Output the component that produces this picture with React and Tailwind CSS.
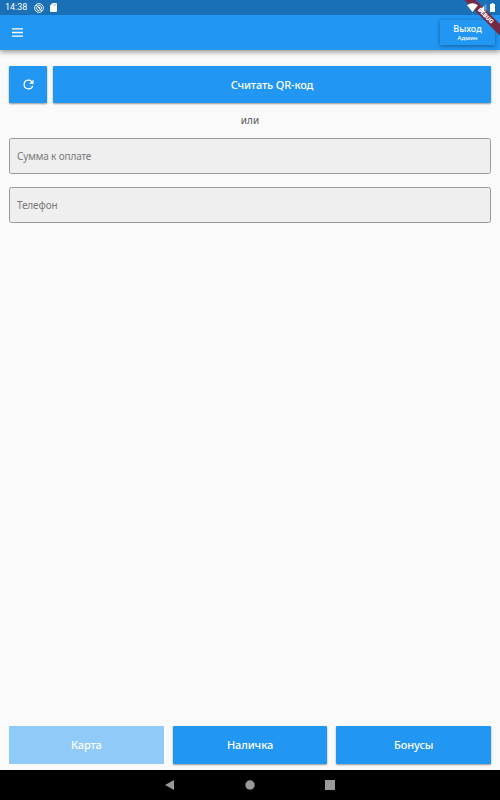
import React from 'react';

const FONT = "font-['Noto_Sans','Open_Sans',sans-serif]";
const RAISED = 'bg-[#2196f3] text-white rounded-[1px] shadow-[0_1px_2px_rgba(0,0,0,0.4)]';

const StatusIcons = () => (
  <div className="absolute right-[5px] top-[3px] z-30 flex text-white">
    <svg className="h-[9px] w-[11px]" viewBox="0 0 11 9" fill="currentColor">
      <path d="M0 2.2Q5.5-1.8 11 2.2L5.5 9z" />
    </svg>
    <svg className="h-[9px] w-[9px]" viewBox="0 0 9 9">
      <path d="M8.5.5v8H.5z" fill="white" fillOpacity="0.35" />
      <path d="M6 3v5.5H.5z" fill="white" />
    </svg>
    <svg className="ml-[3px] h-[9px] w-[5px]" viewBox="0 0 5 9" fill="currentColor">
      <path d="M1.5 0h2v1H5v8H0V1h1.5z" />
    </svg>
  </div>
);

const StatusBar = () => (
  <div className="relative z-10 flex h-[15px] shrink-0 items-center bg-[#1a70b7] pl-[5px] text-white">
    <span className="font-['Roboto',sans-serif] text-[9px] leading-[15px]">14:38</span>
    <svg className="ml-[7px] h-[10px] w-[10px]" viewBox="0 0 10 10" fill="none" stroke="currentColor">
      <circle cx="5" cy="5" r="4.4" strokeWidth="0.9" />
      <path d="M2.4 2.2l5.2 5.6" strokeWidth="1.1" />
      <path d="M4.4 2.4a2.7 2.7 0 0 1 3.1 3.4M2.4 4.4a2.7 2.7 0 0 0 3 3.2M5 3.9l1.2 1.2" strokeWidth="1" />
    </svg>
    <svg className="ml-[6px] h-[9px] w-[7px]" viewBox="0 0 7 9" fill="currentColor">
      <path d="M2.6 0H6q1 0 1 1v7q0 1-1 1H1Q0 9 0 8V2.6z" />
      <path d="M3 1.2v1.5M4.4 1.2v1.5M5.8 1.2v1.5" stroke="#1a70b7" strokeWidth="0.4" />
    </svg>
  </div>
);

const DebugBanner = () => (
  <div className="pointer-events-none absolute right-0 top-0 z-20 h-10 w-10 overflow-hidden">
    <div className="absolute left-[-7px] top-[11px] flex h-[8px] w-[64px] rotate-45 items-center justify-center bg-[#762944] pl-[2px] font-['Roboto',sans-serif] text-[6px] font-black leading-none text-white">
      DEBUG
    </div>
  </div>
);

const AppBar = () => (
  <header className="relative flex h-[35px] shrink-0 items-center justify-between bg-[#2196f3] pl-3 pr-[5px] shadow-[0_2px_5px_rgba(0,0,0,0.4)]">
    <svg className="h-[9px] w-[11px]" viewBox="0 0 11 9" fill="none" stroke="white">
      <path d="M0 .8h11M0 4.5h11M0 8.2h11" strokeWidth="1.3" />
    </svg>
    <button className={`${FONT} flex h-[25px] w-[55px] flex-col items-center rounded-[1px] bg-[#2196f3] pt-[3px] text-white shadow-[0_1px_4px_rgba(0,0,0,0.4)]`}>
      <span className="h-[12px] text-[9px] font-medium leading-[12px]">Выход</span>
      <span className="h-[6px] text-[6px] font-medium leading-[6px]">Админ</span>
    </button>
  </header>
);

const Field = ({ label }) => (
  <input
    placeholder={label}
    className={`${FONT} block h-[36px] w-full rounded-[2.5px] border border-[#999] bg-[#efefef] px-[7px] text-[10px] tracking-[-0.15px] text-gray-700 outline-none placeholder:text-[#7b7b7b]`}
  />
);

const NavBar = () => (
  <nav className="flex h-[30px] shrink-0 items-center justify-center gap-[70px] bg-black text-[#999]">
    <svg className="h-[10px] w-[10px]" viewBox="0 0 10 10" fill="currentColor"><path d="M9 0v10L0 5z" /></svg>
    <svg className="h-[10px] w-[10px]" viewBox="0 0 10 10" fill="currentColor"><circle cx="5" cy="5" r="4.7" /></svg>
    <svg className="h-[10px] w-[10px]" viewBox="0 0 10 10" fill="currentColor"><path d="M0 0h10v10H0z" /></svg>
  </nav>
);

export default function App() {
  return (
    <div className={`${FONT} relative flex h-[800px] w-[500px] flex-col overflow-hidden bg-[#fafafa]`}>
      <StatusBar />
      <AppBar />
      <DebugBanner />
      <StatusIcons />
      <main className="flex flex-1 flex-col px-[9px] pb-[6px] pt-4">
        <div className="flex h-[37px] gap-[6px]">
          <button className={`${RAISED} flex w-[38px] items-center justify-center`}>
            <svg className="h-[15px] w-[15px]" viewBox="0 0 24 24" fill="currentColor">
              <path d="M17.65 6.35A7.958 7.958 0 0 0 12 4a8 8 0 1 0 7.73 10h-2.08A5.99 5.99 0 0 1 12 18a6 6 0 1 1 0-12c1.66 0 3.14.69 4.22 1.78L13 11h7V4z" />
            </svg>
          </button>
          <button className={`${RAISED} flex-1 pt-px text-[11px] font-medium tracking-[-0.15px]`}>Считать QR-код</button>
        </div>
        <p className="mt-[9px] h-4 text-center text-[10px] leading-4 text-[#555]">или</p>
        <div className="mt-[10px] flex flex-col gap-[13px]">
          <Field label="Сумма к оплате" />
          <Field label="Телефон" />
        </div>
        <div className="mt-auto grid h-[38px] grid-cols-3 gap-[9px] text-[11px] font-medium tracking-[-0.1px]">
          <button className="rounded-[1px] bg-[#90caf9] text-white" disabled>Карта</button>
          <button className={RAISED}>Наличка</button>
          <button className={RAISED}>Бонусы</button>
        </div>
      </main>
      <NavBar />
    </div>
  );
}
